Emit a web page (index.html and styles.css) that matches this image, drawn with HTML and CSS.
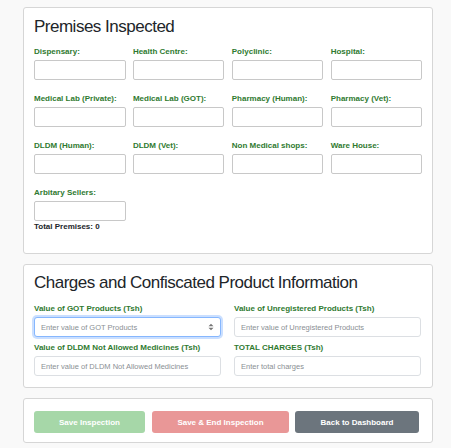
FILE: index.html
```html
<!DOCTYPE html>
<html>
<head>
<meta charset="utf-8">
<link rel="stylesheet" href="styles.css">
</head>
<body>
<div class="page">
  <section class="card card-premises">
    <h2 class="card-title">Premises Inspected</h2>
    <div class="grid4">
      <div class="field"><label>Dispensary:</label><input type="text"></div>
      <div class="field"><label>Health Centre:</label><input type="text"></div>
      <div class="field"><label>Polyclinic:</label><input type="text"></div>
      <div class="field"><label>Hospital:</label><input type="text"></div>
      <div class="field"><label>Medical Lab (Private):</label><input type="text"></div>
      <div class="field"><label>Medical Lab (GOT):</label><input type="text"></div>
      <div class="field"><label>Pharmacy (Human):</label><input type="text"></div>
      <div class="field"><label>Pharmacy (Vet):</label><input type="text"></div>
      <div class="field"><label>DLDM (Human):</label><input type="text"></div>
      <div class="field"><label>DLDM (Vet):</label><input type="text"></div>
      <div class="field"><label>Non Medical shops:</label><input type="text"></div>
      <div class="field"><label>Ware House:</label><input type="text"></div>
      <div class="field last"><label>Arbitary Sellers:</label><input type="text"></div>
    </div>
    <div class="total">Total Premises: 0</div>
  </section>

  <section class="card card-charges">
    <h2 class="card-title">Charges and Confiscated Product Information</h2>
    <div class="grid2">
      <div class="cfield">
        <label>Value of GOT Products (Tsh)</label>
        <div class="input-wrap">
          <input class="cinput focused" type="text" placeholder="Enter value of GOT Products">
          <svg class="spin" width="6" height="8" viewBox="0 0 6 8"><path d="M0.5 3.2 L3 0.8 L5.5 3.2 Z M0.5 4.8 L3 7.2 L5.5 4.8 Z" fill="#777"/></svg>
        </div>
      </div>
      <div class="cfield">
        <label>Value of Unregistered Products (Tsh)</label>
        <input class="cinput" type="text" placeholder="Enter value of Unregistered Products">
      </div>
      <div class="cfield">
        <label>Value of DLDM Not Allowed Medicines (Tsh)</label>
        <input class="cinput" type="text" placeholder="Enter value of DLDM Not Allowed Medicines">
      </div>
      <div class="cfield">
        <label>TOTAL CHARGES (Tsh)</label>
        <input class="cinput" type="text" placeholder="Enter total charges">
      </div>
    </div>
  </section>

  <section class="card card-actions">
    <button class="btn btn-save">Save Inspection</button>
    <button class="btn btn-end">Save &amp; End Inspection</button>
    <button class="btn btn-back">Back to Dashboard</button>
  </section>
</div>
</body>
</html>
```

FILE: styles.css
```css
* { box-sizing: border-box; }
html, body {
  margin: 0;
  padding: 0;
  background: #f9f9f9;
  font-family: "Liberation Sans", Arial, sans-serif;
  color: #212529;
}
.page {
  width: 410px;
  margin-left: 23px;
  padding-top: 7px;
  display: flex;
  flex-direction: column;
  gap: 10px;
}
.card {
  background: #fff;
  border: 1px solid #d6d6d6;
  border-radius: 3px;
  padding: 8px 10px 0 10px;
}
.card-title {
  margin: 0 0 10px 0;
  font-size: 17px;
  letter-spacing: -0.5px;
  font-weight: normal;
  line-height: 21px;
  color: #212529;
}
.card-premises { height: 247px; }
.grid4 {
  display: grid;
  grid-template-columns: repeat(4, 91.5px);
  column-gap: 7.4px;
  row-gap: 14px;
}
.field label, .cfield label {
  display: block;
  font-size: 8px;
  font-weight: bold;
  line-height: 10px;
  color: #2f7a30;
  margin-bottom: 3px;
  white-space: nowrap;
}
.field input {
  display: block;
  width: 100%;
  height: 20px;
  border: 1px solid #c8c8c8;
  border-radius: 2px;
  background: #fff;
  margin: 0;
}
.total {
  margin-top: 1px;
  font-size: 8px;
  font-weight: bold;
  line-height: 10px;
  color: #212529;
}
.card-charges { padding-top: 7px; height: 124px; }
.card-charges .card-title { margin-bottom: 11px; }
.grid2 {
  display: grid;
  grid-template-columns: 187px 187px;
  column-gap: 13px;
  row-gap: 6px;
}
.input-wrap { position: relative; }
.cinput {
  display: block;
  width: 100%;
  height: 20px;
  border: 1px solid #dcdfe3;
  border-radius: 3px;
  padding: 0 6px;
  font-family: "Liberation Sans", Arial, sans-serif;
  font-size: 7.5px;
  color: #495057;
  background: #fff;
  margin: 0;
  outline: none;
}
.cinput::placeholder { color: #8a8f94; }
.cinput.focused {
  border-color: #86b7fe;
  box-shadow: 0 0 0 2px rgba(13, 110, 253, 0.22);
}
.spin {
  position: absolute;
  right: 7px;
  top: 6px;
}
.card-actions {
  display: flex;
  padding: 12px 10px;
  height: 45px;
  gap: 7px;
}
.btn {
  height: 22px;
  border: none;
  border-radius: 3px;
  color: #fff;
  font-family: "Liberation Sans", Arial, sans-serif;
  font-size: 8px;
  font-weight: bold;
  padding: 0;
  margin: 0;
}
.btn-save { width: 111px; background: #a6d7a8; }
.btn-end { width: 137px; background: #e99797; }
.btn-back { width: 124px; background: #6c757d; margin-left: -1px; }
```
